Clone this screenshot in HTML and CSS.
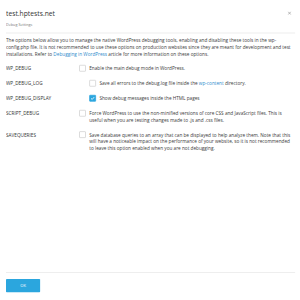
FILE: index.html
```html
<!DOCTYPE html>
<html lang="en">
<head>
  <meta charset="UTF-8" />
  <title>Debug Settings</title>
  <link rel="stylesheet" href="styles.css">
</head>
<body>

  <div class="screen">
    <div class="dialog">
      <div class="dialog-head">
        <div class="head-text">
          <div class="dialog-title">test.hptests.net</div>
          <div class="dialog-subtitle">Debug Settings</div>
        </div>
        <svg class="dialog-close" viewBox="0 0 10 10" width="10" height="10">
          <path d="M1 1 L9 9 M9 1 L1 9" stroke="#8c8c8c" stroke-width="1.6"/>
        </svg>
      </div>

      <div class="dialog-body">
        <p class="intro">
          The options below allow you to manage the native WordPress debugging tools, enabling and disabling these tools in the wp-config.php file. It is not recommended to use these options on production websites since they are meant for development and test installations. Refer to <a href="#">Debugging in WordPress</a> article for more information on these options.
        </p>

        <div class="option">
          <div class="option-name">WP_DEBUG</div>
          <span class="check"></span>
          <div class="option-text">Enable the main debug mode in WordPress.</div>
        </div>

        <div class="option wide">
          <div class="option-name">WP_DEBUG_LOG</div>
          <span class="check"></span>
          <div class="option-text">Save all errors to the debug.log file inside the <a href="#">wp-content</a> directory.</div>
        </div>

        <div class="option wide">
          <div class="option-name">WP_DEBUG_DISPLAY</div>
          <span class="check checked">
            <svg viewBox="0 0 10 10" width="14" height="14"><path d="M2 5.2 L4.2 7.3 L8 2.8" fill="none" stroke="#fff" stroke-width="1.5"/></svg>
          </span>
          <div class="option-text">Show debug messages inside the HTML pages</div>
        </div>

        <div class="option">
          <div class="option-name">SCRIPT_DEBUG</div>
          <span class="check"></span>
          <div class="option-text">Force WordPress to use the non-minified versions of core CSS and JavaScript files. This is useful when you are testing changes made to .js and .css files.</div>
        </div>

        <div class="option">
          <div class="option-name">SAVEQUERIES</div>
          <span class="check"></span>
          <div class="option-text">Save database queries to an array that can be displayed to help analyze them. Note that this will have a noticeable impact on the performance of your website, so it is not recommended to leave this option enabled when you are not debugging.</div>
        </div>
      </div>

      <div class="dialog-foot">
        <button class="btn-ok">OK</button>
      </div>
    </div>
  </div>

</body>
</html>
```

FILE: styles.css
```css
/* the dialog is laid out at its natural size and shown at 3/8 */
body, html {
  margin: 0;
  padding: 0;
  height: 100%;
  overflow: hidden;
  background: #fff;
  font-family: 'Open Sans', sans-serif;
  color: #333;
}

a {
  color: #2f8bcc;
  text-decoration: none;
}

.screen {
  width: 300px;
  height: 300px;
  overflow: hidden;
  position: relative;
}

.dialog {
  display: flex;
  flex-direction: column;
  width: 800px;
  height: 800px;
  padding: 0 13px 0 16px;
  box-sizing: border-box;
  transform: scale(0.375);
  transform-origin: 0 0;
}

.dialog-head {
  display: flex;
  justify-content: space-between;
  align-items: flex-start;
  padding: 24px 0 16px;
  border-bottom: 2px solid #e8e8e8;
}

.dialog-title {
  font-size: 18px;
  line-height: 24px;
  color: #333;
}

.dialog-subtitle {
  margin-top: 10px;
  font-size: 10px;
  line-height: 13px;
  color: #777;
}

.dialog-close {
  margin: 6px 10px 0 0;
}

.dialog-body {
  flex: 1;
  font-size: 12.5px;
  line-height: 17.5px;
  color: #3b3b3b;
}

.intro {
  margin: 11px -10px 21px 0;
}

.option {
  display: flex;
  align-items: flex-start;
  margin-bottom: 22.5px;
}

.option-name {
  width: 195px;
  flex-shrink: 0;
  color: #333;
}

.option.wide .option-name {
  width: 222px;
}

.check {
  width: 18px;
  height: 18px;
  flex-shrink: 0;
  box-sizing: border-box;
  border: 2px solid #d0d0d0;
  border-radius: 2px;
  background: #fff;
  margin: -1px 9px 0 0;
  display: flex;
  align-items: center;
  justify-content: center;
}

.check.checked {
  border-color: #2ba6de;
  background: #2ba6de;
}

.check svg {
  display: block;
}

.option-text {
  max-width: 545px;
}

.dialog-foot {
  border-top: 2px solid #e8e8e8;
  padding: 16px 0 21px;
}

.btn-ok {
  display: block;
  width: 91px;
  height: 35px;
  padding: 0;
  border: none;
  border-radius: 2px;
  background: #2ba6de;
  color: #fff;
  font-family: 'Open Sans', sans-serif;
  font-size: 11px;
  cursor: pointer;
}
```
